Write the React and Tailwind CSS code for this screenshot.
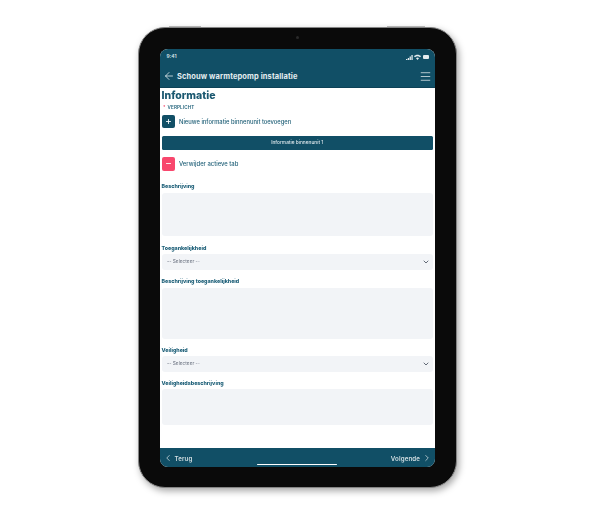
import React from "react";
import { ArrowLeft, ChevronDown, ChevronLeft, ChevronRight, Menu, Plus, Minus } from "lucide-react";

const font = { fontFamily: '"Inter", "Liberation Sans", sans-serif' };

function Label({ children, className = "" }) {
  return <div className={`h-[8px] leading-[8px] text-[5.3px] font-extrabold text-[#1d5f78] ${className}`}>{children}</div>;
}
function Area({ h }) {
  return <div className={`bg-[#f2f4f7] rounded-[3px] ${h}`} />;
}
function Select() {
  return (
    <div className="h-[15.5px] bg-[#f2f4f7] rounded-[3px] flex items-center justify-between pl-[5.5px] pr-[3px]">
      <span className="text-[4.8px] text-[#6b7280]">-- Selecteer --</span>
      <ChevronDown size={8} strokeWidth={2.6} className="text-[#4b5563]" />
    </div>
  );
}

export default function App() {
  return (
    <div className="w-[600px] h-[521px] bg-white pt-[27px] pl-[138px] overflow-hidden" style={font}>
      <div className="relative w-[319px] h-[461px] p-[21px] rounded-[27px] bg-[#0a0a0a] border-[1.5px] border-[#858585] shadow-[2px_3px_7px_rgba(0,0,0,0.35)] blur-[0.6px]">
        <div className="absolute -top-[2px] left-[30px] w-[32px] h-[1px] bg-[#b5b5b5]" />
        <div className="absolute -top-[2px] right-[31px] w-[38px] h-[1px] bg-[#b5b5b5]" />
        <div className="absolute top-[8px] left-[157px] w-[3px] h-[3px] rounded-full bg-[#2a2a2a]" />
        <div className="relative w-[275px] h-[418px] bg-white rounded-[8px] overflow-hidden flex flex-col">
          <header className="h-[39px] bg-[#114f66] text-white shrink-0 flex flex-col border-b border-[#0d4257]">
            <div className="h-[14px] pt-[1px] pl-[6.5px] pr-[6px] flex items-center justify-between">
              <span className="text-[5px] font-semibold text-[#d8e3e8]">9:41</span>
              <svg width="23" height="6" viewBox="0 0 23 6" fill="#e3ebee">
                <path d="M0 5h1.3v1H0zM1.8 4h1.3v2H1.8zM3.6 2.5h1.3V6H3.6zM5.4 1h1.3v5H5.4z" />
                <path d="M8 2.2C10 .2 13 .2 15 2.2l-1 1c-1.4-1.4-3.6-1.4-5 0zM10 4.2c.9-.9 2.1-.9 3 0L11.5 6z" />
                <rect x="17" y="1" width="6" height="4" rx="1" />
              </svg>
            </div>
            <div className="flex-1 flex items-center pt-[2px] pl-[2.5px] pr-[3px]">
              <ArrowLeft size={12} strokeWidth={1.6} className="text-[#e4edf0]" />
              <span className="ml-[2.5px] mt-[1px] text-[7.5px] font-bold tracking-[0.1px] text-[#e4edf0]">Schouw warmtepomp installatie</span>
              <Menu size={13} strokeWidth={1.5} className="ml-auto text-[#d5e0e4]" />
            </div>
          </header>

          <main className="flex-1 pl-[1.5px] pr-[2px] min-h-0">
            <h1 className="mt-[1px] h-[14px] leading-[14px] text-[10.5px] font-extrabold text-[#1b5870]">Informatie</h1>
            <div className="mt-[1.5px] pl-[1.5px] h-[6px] leading-[6px] text-[4.6px] font-semibold tracking-[0.1px] text-[#1d5f78]">
              <span className="text-[#f0476b]">*</span>
              <span className="ml-[2px]">VERPLICHT</span>
            </div>
            <div className="mt-[4px] h-[14px] flex items-center">
              <div className="w-[13.5px] h-[13.5px] rounded-[2px] bg-[#114f66] flex items-center justify-center">
                <Plus size={7} strokeWidth={3} className="text-white" />
              </div>
              <span className="ml-[4px] mt-[1px] text-[5.8px] text-[#1f5f77] font-medium">Nieuwe informatie binnenunit toevoegen</span>
            </div>
            <div className="mt-[7.5px] h-[14px] rounded-[1.5px] bg-[#114f66] flex items-center justify-center text-[4.8px] font-medium text-[#dbe6ea]">
              Informatie binnenunit 1
            </div>
            <div className="mt-[6.5px] h-[14px] flex items-center">
              <div className="w-[13.5px] h-[14px] rounded-[2px] bg-[#f8476d] flex items-center justify-center">
                <Minus size={7} strokeWidth={3} className="text-white" />
              </div>
              <span className="ml-[4px] mt-[2px] text-[5.9px] text-[#1f5f77] font-medium">Verwijder actieve tab</span>
            </div>

            <Label className="mt-[11.5px]">Beschrijving</Label>
            <div className="mt-[2.5px]"><Area h="h-[43px]" /></div>
            <Label className="mt-[8px]">Toegankelijkheid</Label>
            <div className="mt-[2.5px]"><Select /></div>
            <Label className="mt-[7.5px]">Beschrijving toegankelijkheid</Label>
            <div className="mt-[2.5px]"><Area h="h-[51px]" /></div>
            <Label className="mt-[7px]">Veiligheid</Label>
            <div className="mt-[2.5px]"><Select /></div>
            <Label className="mt-[7px]">Veiligheidsbeschrijving</Label>
            <div className="mt-[2.5px]"><Area h="h-[35.5px]" /></div>
          </main>

          <footer className="relative h-[19px] shrink-0 bg-[#114f66] flex items-center justify-between pt-[1px] pl-[3px] pr-[3.5px] text-[#d3dfe3] text-[6.2px] font-semibold tracking-[0.1px]">
            <div className="flex items-center gap-[1.5px]">
              <ChevronLeft size={10} strokeWidth={1.8} />
              <span className="mt-[1px]">Terug</span>
            </div>
            <div className="flex items-center gap-[1.5px]">
              <span className="mt-[1px]">Volgende</span>
              <ChevronRight size={10} strokeWidth={1.8} />
            </div>
            <div className="absolute bottom-[2px] left-[97px] w-[80px] h-[1.5px] rounded-full bg-white" />
          </footer>
        </div>
      </div>
    </div>
  );
}
